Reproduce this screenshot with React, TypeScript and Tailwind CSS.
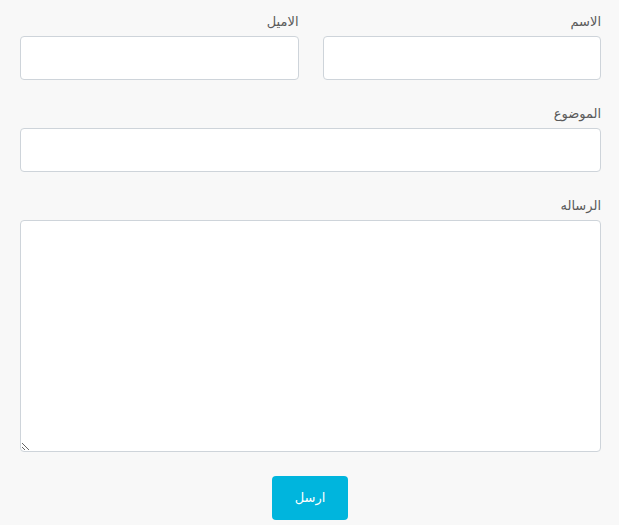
export default function App() {
  return (
    <div
      dir="rtl"
      className="min-h-[525px] bg-[#f8f8f8] pl-5 pr-[18px] pt-3 text-[13px] text-[#5a5a5a]"
      style={{ fontFamily: '"DejaVu Sans", "Noto Sans", sans-serif' }}
    >
      <form className="flex flex-col gap-6">
        <div className="grid grid-cols-2 gap-6">
          <div>
            <label className="mb-1 block leading-5">الاسم</label>
            <input className="h-11 w-full rounded border border-[#ced4da] bg-white px-3" />
          </div>
          <div>
            <label className="mb-1 block leading-5">الاميل</label>
            <input className="h-11 w-full rounded border border-[#ced4da] bg-white px-3" />
          </div>
        </div>
        <div>
          <label className="mb-1 block leading-5">الموضوع</label>
          <input className="h-11 w-full rounded border border-[#ced4da] bg-white px-3" />
        </div>
        <div>
          <label className="mb-1 block leading-5">الرساله</label>
          <textarea className="block h-[232px] w-full rounded border border-[#ced4da] bg-white px-3" />
        </div>
        <div className="flex justify-center pr-px">
          <button
            type="button"
            className="h-11 w-[76px] rounded bg-[#00b5dd] text-[13px] text-white"
          >
            ارسل
          </button>
        </div>
      </form>
    </div>
  )
}
